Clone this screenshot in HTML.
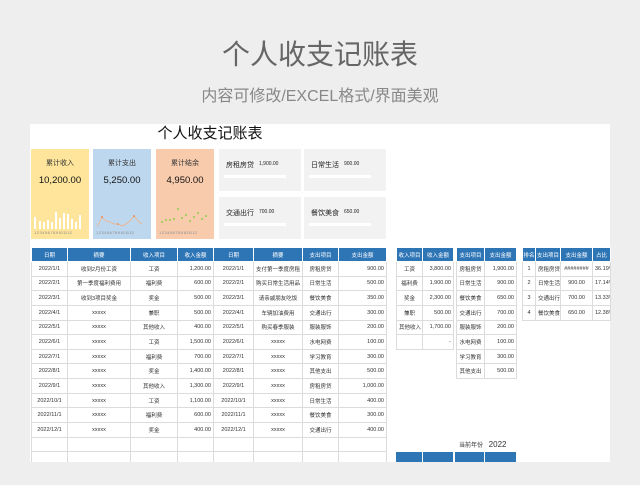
<!DOCTYPE html>
<html><head><meta charset="utf-8"><style>
*{margin:0;padding:0;box-sizing:border-box}
body{width:640px;height:485px;background:#eeeeee;position:relative;overflow:hidden;font-family:"Liberation Sans","Noto Sans CJK SC",sans-serif}
.a{position:absolute}
.t1{left:0;width:640px;top:36px;text-align:center;font-size:28px;color:#666;line-height:38px}
.t2{left:0;width:640px;top:87px;text-align:center;font-size:16px;color:#888;line-height:20px}
.sheet{left:30px;top:124px;width:580px;height:338px;background:#fff}
table{position:absolute;border-collapse:collapse;table-layout:fixed;font-size:5.5px;color:#333}
td{border:1px solid #dcdcdc;height:14.65px;text-align:center;white-space:nowrap;overflow:hidden;padding:0 2px}
th{background:#2e75b6;color:#fff;font-weight:normal;height:14px;border:1px solid #fff;font-size:5.5px;white-space:nowrap;overflow:hidden}
td.r{text-align:right}
.card{top:149px;width:58px;height:90px;text-align:center;font-size:7px;color:#333}
.card .l{position:absolute;top:9px;width:100%}
.card .v{position:absolute;top:26px;width:100%;font-size:9.5px;color:#111}
.card .ax{position:absolute;top:81px;left:3px;font-size:4px;color:#888;letter-spacing:-0.3px}
.gb{background:#f2f2f2;width:82px;height:42px;font-size:7px;color:#222}
.gb .l{position:absolute;left:7px;top:11px}
.gb .v{position:absolute;left:40px;top:12px;font-size:5px}
.gb .b{position:absolute;left:5px;top:26px;width:62px;height:3px;background:#fff}
</style></head><body>
<div class="a t1">个人收支记账表</div>
<div class="a t2">内容可修改/EXCEL格式/界面美观</div>
<div class="a sheet"></div>
<div class="a" style="left:140px;top:122px;width:140px;text-align:center;font-size:15px;color:#111">个人收支记账表</div>

<div class="a card" style="left:31px;background:#fee59b"><div class="l">累计收入</div><div class="v">10,200.00</div>
<svg class="a" style="left:0;top:60px" width="58" height="20"><g fill="#fff"><rect x="3" y="8" width="2" height="12"/><rect x="8" y="12" width="2" height="8"/><rect x="12" y="13" width="2" height="7"/><rect x="16" y="11" width="2" height="9"/><rect x="20" y="13" width="2" height="7"/><rect x="24" y="3" width="2" height="17"/><rect x="28" y="9" width="2" height="11"/><rect x="32" y="4" width="2" height="16"/><rect x="36" y="5" width="2" height="15"/><rect x="40" y="10" width="2" height="10"/><rect x="44" y="13" width="2" height="7"/><rect x="48" y="6" width="2" height="14"/></g></svg>
<div class="ax">1 2 3 4 5 6 7 8 9 10 11 12</div></div>
<div class="a card" style="left:93px;background:#bdd7ee"><div class="l">累计支出</div><div class="v">5,250.00</div>
<svg class="a" style="left:0;top:60px" width="58" height="20"><polyline fill="none" stroke="#f4b183" stroke-width="0.8" points="4,18 9,8 13,12 17,13 21,15 25,15 29,17 33,15 37,12 41,7 45,12 49,15"/><g fill="#ed7d31"><circle cx="9" cy="8" r="0.9"/><circle cx="41" cy="7" r="0.9"/><circle cx="25" cy="15" r="0.8"/></g></svg>
<div class="ax">1 2 3 4 5 6 7 8 9 10 11 12</div></div>
<div class="a card" style="left:156px;background:#f8cbad"><div class="l">累计结余</div><div class="v">4,950.00</div>
<svg class="a" style="left:0;top:52px" width="58" height="28"><g fill="#92d050"><circle cx="6" cy="21" r="1"/><circle cx="10" cy="19" r="1"/><circle cx="14" cy="19" r="1"/><circle cx="18" cy="18" r="1"/><circle cx="22" cy="8" r="1"/><circle cx="26" cy="17" r="1"/><circle cx="30" cy="14" r="1"/><circle cx="34" cy="20" r="1"/><circle cx="38" cy="16" r="1"/><circle cx="42" cy="12" r="1"/><circle cx="46" cy="18" r="1"/><circle cx="50" cy="15" r="1"/></g></svg>
<div class="ax">1 2 3 4 5 6 7 8 9 10 11 12</div></div>

<div class="a gb" style="left:219px;top:149px"><div class="l">房租房贷</div><div class="v">1,900.00</div><div class="b"></div></div>
<div class="a gb" style="left:304px;top:149px"><div class="l">日常生活</div><div class="v">900.00</div><div class="b"></div></div>
<div class="a gb" style="left:219px;top:197px"><div class="l">交通出行</div><div class="v">700.00</div><div class="b"></div></div>
<div class="a gb" style="left:304px;top:197px"><div class="l">餐饮美食</div><div class="v">650.00</div><div class="b"></div></div>

<table style="left:31px;top:247px;width:355px">
<colgroup><col style="width:36px"><col style="width:63px"><col style="width:47px"><col style="width:36px"><col style="width:40px"><col style="width:49px"><col style="width:36px"><col style="width:48px"></colgroup>
<tr><th>日期</th><th>摘要</th><th>收入项目</th><th>收入金额</th><th>日期</th><th>摘要</th><th>支出项目</th><th>支出金额</th></tr>
<tr><td>2022/1/1</td><td>收到2月份工资</td><td>工资</td><td class="r">1,200.00</td><td>2022/1/1</td><td>支付第一季度房租</td><td>房租房贷</td><td class="r">900.00</td></tr>
<tr><td>2022/2/1</td><td>第一季度福利费用</td><td>福利费</td><td class="r">600.00</td><td>2022/2/1</td><td>购买日常生活用品</td><td>日常生活</td><td class="r">500.00</td></tr>
<tr><td>2022/3/1</td><td>收到3项目奖金</td><td>奖金</td><td class="r">500.00</td><td>2022/3/1</td><td>请亲戚朋友吃饭</td><td>餐饮美食</td><td class="r">350.00</td></tr>
<tr><td>2022/4/1</td><td>xxxxx</td><td>兼职</td><td class="r">500.00</td><td>2022/4/1</td><td>车辆加油费用</td><td>交通出行</td><td class="r">300.00</td></tr>
<tr><td>2022/5/1</td><td>xxxxx</td><td>其他收入</td><td class="r">400.00</td><td>2022/5/1</td><td>购买春季服装</td><td>服装服饰</td><td class="r">200.00</td></tr>
<tr><td>2022/6/1</td><td>xxxxx</td><td>工资</td><td class="r">1,500.00</td><td>2022/6/1</td><td>xxxxx</td><td>水电网费</td><td class="r">100.00</td></tr>
<tr><td>2022/7/1</td><td>xxxxx</td><td>福利费</td><td class="r">700.00</td><td>2022/7/1</td><td>xxxxx</td><td>学习教育</td><td class="r">300.00</td></tr>
<tr><td>2022/8/1</td><td>xxxxx</td><td>奖金</td><td class="r">1,400.00</td><td>2022/8/1</td><td>xxxxx</td><td>其他支出</td><td class="r">500.00</td></tr>
<tr><td>2022/9/1</td><td>xxxxx</td><td>其他收入</td><td class="r">1,300.00</td><td>2022/9/1</td><td>xxxxx</td><td>房租房贷</td><td class="r">1,000.00</td></tr>
<tr><td>2022/10/1</td><td>xxxxx</td><td>工资</td><td class="r">1,100.00</td><td>2022/10/1</td><td>xxxxx</td><td>日常生活</td><td class="r">400.00</td></tr>
<tr><td>2022/11/1</td><td>xxxxx</td><td>福利费</td><td class="r">600.00</td><td>2022/11/1</td><td>xxxxx</td><td>餐饮美食</td><td class="r">300.00</td></tr>
<tr><td>2022/12/1</td><td>xxxxx</td><td>奖金</td><td class="r">400.00</td><td>2022/12/1</td><td>xxxxx</td><td>交通出行</td><td class="r">400.00</td></tr>
<tr><td></td><td></td><td></td><td></td><td></td><td></td><td></td><td></td></tr>
<tr><td></td><td></td><td></td><td></td><td></td><td></td><td></td><td></td></tr>
</table>
<div class="a" style="left:30px;top:462px;width:580px;height:23px;background:#eeeeee"></div>

<table style="left:396px;top:247px;width:57px">
<colgroup><col style="width:26px"><col style="width:31px"></colgroup>
<tr><th>收入项目</th><th>收入金额</th></tr>
<tr><td>工资</td><td class="r">3,800.00</td></tr>
<tr><td>福利费</td><td class="r">1,900.00</td></tr>
<tr><td>奖金</td><td class="r">2,300.00</td></tr>
<tr><td>兼职</td><td class="r">500.00</td></tr>
<tr><td>其他收入</td><td class="r">1,700.00</td></tr>
<tr><td></td><td class="r">-</td></tr>
</table>
<table style="left:456px;top:247px;width:60px">
<colgroup><col style="width:28px"><col style="width:32px"></colgroup>
<tr><th>支出项目</th><th>支出金额</th></tr>
<tr><td>房租房贷</td><td class="r">1,900.00</td></tr>
<tr><td>日常生活</td><td class="r">900.00</td></tr>
<tr><td>餐饮美食</td><td class="r">650.00</td></tr>
<tr><td>交通出行</td><td class="r">700.00</td></tr>
<tr><td>服装服饰</td><td class="r">200.00</td></tr>
<tr><td>水电网费</td><td class="r">100.00</td></tr>
<tr><td>学习教育</td><td class="r">300.00</td></tr>
<tr><td>其他支出</td><td class="r">500.00</td></tr>
</table>
<table style="left:522px;top:247px;width:88px">
<colgroup><col style="width:13px"><col style="width:25px"><col style="width:32px"><col style="width:18px"></colgroup>
<tr><th>排名</th><th>支出项目</th><th>支出金额</th><th>占比</th></tr>
<tr><td>1</td><td>房租房贷</td><td>########</td><td class="r">36.19%</td></tr>
<tr><td>2</td><td>日常生活</td><td>900.00</td><td class="r">17.14%</td></tr>
<tr><td>3</td><td>交通出行</td><td>700.00</td><td class="r">13.33%</td></tr>
<tr><td>4</td><td>餐饮美食</td><td>650.00</td><td class="r">12.38%</td></tr>
</table>
<div class="a" style="left:459px;top:440px;font-size:6px;color:#333">当前年份 <span style="font-size:8px;margin-left:4px">2022</span></div>
<div class="a" style="left:396px;top:452px;width:120px;height:10px;background:#2e75b6"></div>
<div class="a" style="left:422px;top:452px;width:1px;height:10px;background:#fff"></div>
<div class="a" style="left:453px;top:452px;width:2px;height:10px;background:#fff"></div>
<div class="a" style="left:484px;top:452px;width:1px;height:10px;background:#fff"></div>
</body></html>
